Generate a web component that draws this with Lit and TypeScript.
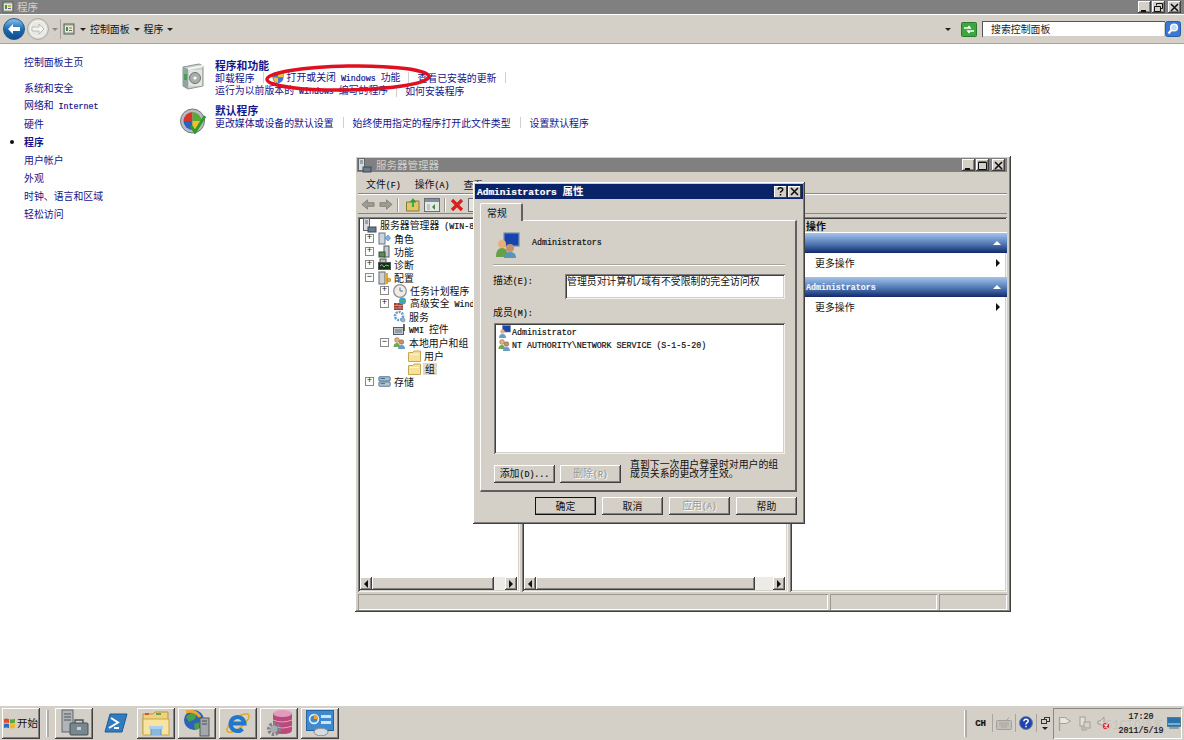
import { LitElement, html, css } from "lit";
import { customElement } from "lit/decorators.js";

// wrap ascii runs so they get the half-width latin face next to the CJK text
const t = (s: string) =>
  s.split(/([\x00-\x7f]+)/).map((p, i) => (i % 2 ? html`<span class="l">${p}</span>` : p));

const icons = {
  panel: (s = 12) => html`<svg width=${s} height=${s} viewBox="0 0 12 12"><rect x="1" y="1" width="10" height="10" fill="#b8c4b4" stroke="#56605a"/><rect x="2" y="3" width="8" height="6" fill="#e8ead8"/><rect x="3" y="4" width="2" height="4" fill="#4a8a5a"/><rect x="6" y="4" width="3" height="2" fill="#d8b040"/><rect x="6" y="7" width="3" height="1" fill="#5a6a8a"/></svg>`,
  programs: html`<svg width="25" height="28" viewBox="0 0 25 28"><path d="M3 5 L19 2 L23 4 L23 24 L8 27 L3 24Z" fill="#c9d2cf" stroke="#8a9490"/><path d="M3 5 L8 7 L8 27 L3 24Z" fill="#8fa49c"/><path d="M8 7 L23 4" stroke="#f4f6f0" stroke-width="2"/><rect x="9" y="8" width="13" height="16" fill="#e4e6de"/><circle cx="15" cy="16" r="5.5" fill="#a9b0ac" stroke="#6d7672"/><circle cx="15" cy="16" r="1.6" fill="#fff"/><rect x="4" y="12" width="3" height="6" fill="#4e9a5a"/></svg>`,
  defaults: html`<svg width="26" height="27" viewBox="0 0 26 27"><circle cx="12.5" cy="14" r="12" fill="#b9bcc0" stroke="#73777c"/><path d="M12.5 14 V5 A9 9 0 0 0 3.5 14Z" fill="#d8342c"/><path d="M12.5 14 V5 A9 9 0 0 1 21.5 14Z" fill="#58a83c"/><path d="M12.5 14 H3.5 A9 9 0 0 0 12.5 23Z" fill="#2a62c0"/><path d="M12.5 14 H21.5 A9 9 0 0 1 12.5 23Z" fill="#f0c020"/><path d="M11 19 L15 25 L25 9" fill="none" stroke="#2f9a2a" stroke-width="3"/></svg>`,
  shield: html`<svg width="12" height="13" viewBox="0 0 12 13"><path d="M6 0.5 L11.5 2 V7 Q11 11 6 12.5 Q1 11 0.5 7 V2Z" fill="#3a6ac8"/><path d="M6 1 V6.5 H1 V2.4Z" fill="#3f78d8"/><path d="M6 1 L11 2.4 V6.5 H6Z" fill="#f2c430"/><path d="M1 6.5 H6 V12 Q2 11 1 6.5Z" fill="#f2c430"/><path d="M6 6.5 H11 Q10.5 11 6 12Z" fill="#3f78d8"/></svg>`,
  back: html`<svg width="22" height="22" viewBox="0 0 22 22"><defs><linearGradient id="bk" x1="0" y1="0" x2="0" y2="1"><stop offset="0" stop-color="#8cc4ec"/><stop offset=".5" stop-color="#1f6db4"/><stop offset="1" stop-color="#0c4c90"/></linearGradient></defs><circle cx="11" cy="11" r="10.5" fill="url(#bk)" stroke="#2a5a8a"/><path d="M5 11 L10 6 V9 H17 V13 H10 V16Z" fill="#fff"/></svg>`,
  forward: html`<svg width="22" height="22" viewBox="0 0 22 22"><circle cx="11" cy="11" r="10.5" fill="#dcdcd6" stroke="#a8aaa6"/><circle cx="11" cy="11" r="8" fill="#e8e8e2" stroke="#f8f8f4"/><path d="M17 11 L12 6 V9 H5 V13 H12 V16Z" fill="#f4f4f0" stroke="#a4a6a2" stroke-width=".7"/></svg>`,
  refresh: html`<svg width="16" height="15" viewBox="0 0 16 15"><rect x=".5" y=".5" width="15" height="14" rx="1" fill="#3aa83c" stroke="#2a7a30"/><path d="M3 6 H9 L7.5 4 M13 9 H7 L8.5 11" fill="none" stroke="#fff" stroke-width="1.6"/></svg>`,
  search: html`<svg width="16" height="16" viewBox="0 0 16 16"><rect x=".5" y=".5" width="15" height="15" rx="2" fill="#3a78d8" stroke="#2a5aa8"/><circle cx="9" cy="6.5" r="3.4" fill="#bcdcf8" stroke="#fff" stroke-width="1.4"/><path d="M6.5 9 L3.5 12.5" stroke="#fff" stroke-width="2"/></svg>`,
  server: html`<svg width="15" height="15" viewBox="0 0 15 15"><rect x="1.5" y=".5" width="6" height="12" fill="#d8dce0" stroke="#606870"/><path d="M3 3 H6 M3 5 H6" stroke="#606870"/><rect x="6" y="9" width="8" height="5" fill="#6a7c8c" stroke="#3e4a56"/></svg>`,
  role: html`<svg width="13" height="13" viewBox="0 0 13 13"><rect x="1" y="1" width="6" height="11" fill="#ccd4dc" stroke="#6a7480"/><path d="M7 6 L10 3 L12.5 6 L10 9Z" fill="#7ab4e8" stroke="#4a80b0" stroke-width=".6"/></svg>`,
  feature: html`<svg width="13" height="13" viewBox="0 0 13 13"><rect x="6" y="1" width="5" height="11" fill="#c8ccd0" stroke="#555c64"/><rect x="1" y="7" width="6" height="5" fill="#5c8a5c" stroke="#2f4f30"/></svg>`,
  diag: html`<svg width="13" height="13" viewBox="0 0 13 13"><rect x="2" y="1" width="6" height="4" fill="#b8bec4" stroke="#555"/><rect x=".5" y="4.5" width="12" height="7" fill="#1c2c1c" stroke="#555"/><path d="M2 8 L4 6.5 L6 9 L8 7 L11 8" stroke="#58d858" fill="none"/></svg>`,
  config: html`<svg width="13" height="14" viewBox="0 0 13 14"><rect x="1" y="1" width="6" height="12" fill="#ced2d6" stroke="#666"/><rect x="8" y="2" width="2" height="11" fill="#e8a820"/><circle cx="11" cy="9" r="1.8" fill="#e8b838" stroke="#946c10" stroke-width=".6"/></svg>`,
  clock: html`<svg width="14" height="14" viewBox="0 0 14 14"><circle cx="7" cy="7" r="6.3" fill="#f0ece0" stroke="#8c9298" stroke-width="1.3"/><path d="M7 3.5 V7 H10" stroke="#4a78a8" fill="none"/></svg>`,
  firewall: html`<svg width="14" height="13" viewBox="0 0 14 13"><rect x="1" y="6" width="9" height="7" fill="#a04030"/><path d="M1 8.5 H10 M1 11 H10 M4 6 V8.5 M7 8.5 V11" stroke="#e0c0a8" stroke-width=".6"/><circle cx="9.5" cy="4" r="3.5" fill="#3aa0d8"/><path d="M7 3 Q10 2 12 5" stroke="#58b048" fill="none" stroke-width="1.4"/></svg>`,
  gear: html`<svg width="13" height="13" viewBox="0 0 13 13"><circle cx="6" cy="6" r="4" fill="none" stroke="#6a9ad0" stroke-width="2.6" stroke-dasharray="2 1"/><circle cx="6" cy="6" r="2" fill="#fff"/><circle cx="10" cy="10" r="2" fill="#9ab8d8" stroke="#5a80a8" stroke-width=".6"/></svg>`,
  wmi: html`<svg width="13" height="13" viewBox="0 0 13 13"><rect x=".5" y="4.5" width="10" height="7" fill="#c0c8d0" stroke="#555e68"/><path d="M2 7 H9 M2 9 H9" stroke="#60707e"/><path d="M11 1 V8" stroke="#444" stroke-width="1.6"/></svg>`,
  users: (s = 13) => html`<svg width=${s} height=${s} viewBox="0 0 13 13"><rect x="5" y="0.5" width="7.5" height="6.5" fill="#1844b0" stroke="#7a8ea8" stroke-width=".6"/><circle cx="4" cy="6" r="2" fill="#e8b078"/><path d="M1 12.5 Q1 8 4 8 Q7 8 7 12.5Z" fill="#68a048"/><circle cx="8" cy="8" r="2" fill="#c89068"/><path d="M5 13 Q5 10 8 10 Q11 10 11 13Z" fill="#5a94b8"/></svg>`,
  user: html`<svg width="13" height="13" viewBox="0 0 13 13"><rect x="4.5" y=".5" width="8" height="6.5" fill="#1844b0" stroke="#7a8ea8" stroke-width=".6"/><circle cx="4.5" cy="6.5" r="2.2" fill="#e8b078"/><path d="M1 13 Q1 9 4.5 9 Q8 9 8 13Z" fill="#6a9cc8"/></svg>`,
  group: html`<svg width="13" height="13" viewBox="0 0 13 13"><circle cx="4" cy="4" r="2.4" fill="#e4b080" stroke="#8a6a40" stroke-width=".5"/><path d="M.5 11 Q.5 7 4 7 Q7 7 7 11Z" fill="#70a850"/><circle cx="8.5" cy="6" r="2.3" fill="#c89068" stroke="#6a5040" stroke-width=".5"/><path d="M5 13 Q5 9 8.5 9 Q12 9 12 13Z" fill="#6a9cc8"/></svg>`,
  folder: html`<svg width="13" height="12" viewBox="0 0 13 12"><path d="M.5 2.5 H5 L6 1 H12.5 V11.5 H.5Z" fill="#f6e09a" stroke="#c8a850"/><rect x="2" y="4" width="9" height="1" fill="#fff6d0"/></svg>`,
  storage: html`<svg width="13" height="13" viewBox="0 0 15 13"><rect x="1" y="1" width="13" height="5" rx="1" fill="#9fc0d8" stroke="#4a6a84"/><rect x="1" y="7" width="13" height="5" rx="1" fill="#b8c8d4" stroke="#4a6a84"/><path d="M3 3 H8 M3 9 H8" stroke="#2e5a7a"/></svg>`,
  navBack: html`<svg width="14" height="13" viewBox="0 0 15 13"><path d="M1 6.5 L7 1.5 V4.5 H14 V8.5 H7 V11.5Z" fill="#9c9c92" stroke="#84847a"/></svg>`,
  navFwd: html`<svg width="14" height="13" viewBox="0 0 15 13"><path d="M14 6.5 L8 1.5 V4.5 H1 V8.5 H8 V11.5Z" fill="#9c9c92" stroke="#84847a"/></svg>`,
  upFolder: html`<svg width="14" height="14" viewBox="0 0 14 14"><path d="M.5 4 H5 L6 3 H13 V13 H.5Z" fill="#dcc868" stroke="#8a7a30"/><path d="M7 9 V3 M4.5 4.5 L7 1.5 L9.5 4.5" stroke="#2e9a3c" stroke-width="1.6" fill="none"/></svg>`,
  viewPane: html`<svg width="16" height="14" viewBox="0 0 16 14"><rect x=".5" y=".5" width="15" height="13" fill="#e8e8e2" stroke="#6a6e72"/><rect x="1" y="1" width="14" height="3" fill="#7e8ea0"/><rect x="3" y="6" width="3" height="6" fill="#bcc4cc"/><path d="M11 6 L8 9 L11 12Z" fill="#3a8a4a"/></svg>`,
  redX: html`<svg width="14" height="14" viewBox="0 0 14 14"><path d="M2 2 L12 12 M12 2 L2 12" stroke="#d8201c" stroke-width="3.2"/></svg>`,
  page: html`<svg width="14" height="14" viewBox="0 0 14 14"><rect x=".5" y=".5" width="13" height="13" fill="#e4e4de" stroke="#6a6e72"/></svg>`,
  tbServer: html`<svg width="30" height="28" viewBox="0 0 30 28"><rect x="3" y="1" width="11" height="22" fill="#b0b4b8" stroke="#60666c"/><path d="M5 5 H12 M5 8 H12 M5 11 H12" stroke="#50565c"/><rect x="11" y="14" width="18" height="12" rx="1" fill="#78868e" stroke="#48525a"/><path d="M16 14 V11 H24 V14" fill="none" stroke="#48525a" stroke-width="1.4"/><rect x="18" y="18" width="4" height="3" fill="#c8d0d4"/></svg>`,
  tbPs: html`<svg width="24" height="20" viewBox="0 0 24 20"><path d="M6 1 H23 L18 19 H1Z" fill="#2f7cc0" stroke="#1c5a94"/><path d="M7 5 L14 9.5 L5 15 M10 15 H15" fill="none" stroke="#fff" stroke-width="2"/></svg>`,
  tbFolder: html`<svg width="28" height="26" viewBox="0 0 28 26"><path d="M1 4 H11 L13 2 H26 V24 H1Z" fill="#efd27a" stroke="#b8963c"/><rect x="3" y="3" width="4" height="2" fill="#d85040"/><rect x="14" y="3" width="5" height="2" fill="#58a858"/><path d="M1 9 H27 V25 H1Z" fill="#f7e4a0" stroke="#c4a44c"/><path d="M9 25 V18 H19 V25" fill="#88b8e0" stroke="#6a94bc"/><rect x="7" y="16" width="14" height="3" fill="#a8d0f0"/></svg>`,
  tbGlobe: html`<svg width="28" height="28" viewBox="0 0 28 28"><circle cx="11" cy="11" r="10" fill="#2c62b8"/><path d="M3 8 Q8 2 14 4 L12 10 L6 13Z" fill="#4aa048"/><path d="M11 15 L17 13 L16 20 L12 21Z" fill="#4aa048"/><path d="M3 3 Q12 0 17 8" stroke="#f0a828" stroke-width="3" fill="none"/><rect x="17" y="9" width="9" height="18" fill="#a4a8ac" stroke="#555b60"/><path d="M19 12 H24 M19 15 H24" stroke="#484c50"/></svg>`,
  tbIe: html`<svg width="28" height="28" viewBox="0 0 28 28"><ellipse cx="14" cy="14" rx="13.5" ry="5" transform="rotate(-38 14 14)" fill="none" stroke="#e8a818" stroke-width="1.5"/><path d="M7.5 14.5 H20.5 A7 7 0 1 0 18.5 20" fill="none" stroke="#1f78cc" stroke-width="4"/></svg>`,
  tbDb: html`<svg width="28" height="28" viewBox="0 0 28 28"><path d="M8 4 V21 Q8 25 18 25 Q27 25 27 21 V4Z" fill="#b84a7c"/><ellipse cx="17.5" cy="4.5" rx="9.5" ry="3.5" fill="#e49cbc"/><path d="M8 11 Q17 15 27 11 M8 17 Q17 21 27 17" stroke="#e8a4c0" fill="none"/><circle cx="9" cy="20" r="5" fill="none" stroke="#80848a" stroke-width="4" stroke-dasharray="2.4 1.3"/><circle cx="9" cy="20" r="3.5" fill="#a8acb0"/></svg>`,
  tbPanel: html`<svg width="28" height="26" viewBox="0 0 28 26"><rect x=".5" y=".5" width="27" height="20" fill="#3e8ad0" stroke="#2a62a0"/><circle cx="8" cy="9" r="4.4" fill="none" stroke="#e0f0ff" stroke-width="1.6"/><path d="M8 9 V4.6 A4.4 4.4 0 0 1 12.4 9Z" fill="#f0a030"/><rect x="15" y="5" width="10" height="3" fill="#cfe4f8"/><rect x="15" y="11" width="10" height="3" fill="#cfe4f8"/><ellipse cx="15" cy="22" rx="7" ry="3.8" fill="#d8dce0" stroke="#8a8e92"/></svg>`,
  flag: html`<svg width="14" height="15" viewBox="0 0 14 15"><path d="M1.5 1.5 H8 V2.5 L12.5 5 L8 7.5 H1.5Z" fill="#e8e6de" stroke="#a6a498"/><path d="M1.5 1 V15" stroke="#a6a498" stroke-width="1.4"/></svg>`,
  winFlag: html`<svg width="13" height="12" viewBox="0 0 13 12"><path d="M1 2 Q3 1 6 2 V6 Q3 5 1 6Z" fill="#e04a2a"/><path d="M7 2 Q9 3 12 1.5 V5.5 Q9 7 7 6Z" fill="#5ca83a"/><path d="M1 7 Q3 6 6 7 V11 Q3 10 1 11Z" fill="#2c6ac8"/><path d="M7 7 Q9 8 12 6.5 V10.5 Q9 12 7 11Z" fill="#f0b820"/></svg>`,
  keyboard: html`<svg width="16" height="13" viewBox="0 0 16 13"><rect x=".5" y="3.5" width="15" height="9" rx="1" fill="#c2c0b8" stroke="#a2a098"/><path d="M3 6 H13 M3 8 H13 M5 10 H11" stroke="#a8a69e"/><path d="M11 3 L13 .5" stroke="#a2a098"/></svg>`,
  help: html`<svg width="14" height="14" viewBox="0 0 14 14"><circle cx="7" cy="7" r="6.5" fill="#1e44b0" stroke="#70809c"/><path d="M4.8 5.2 Q5 3.2 7 3.2 Q9.2 3.2 9.2 5 Q9.2 6.2 7.6 7 Q7 7.4 7 8.6 M7 9.8 V11.2" fill="none" stroke="#fff" stroke-width="1.5"/></svg>`,
  net: html`<svg width="13" height="15" viewBox="0 0 13 15"><rect x="2" y="1" width="5" height="9" fill="#e2e0d8" stroke="#a0a094"/><rect x="6" y="6" width="6" height="6" fill="#d4d2ca" stroke="#a0a094"/><path d="M4 10 V14 H9" stroke="#a0a094" fill="none"/></svg>`,
  sound: html`<svg width="14" height="15" viewBox="0 0 14 15"><path d="M1 5 H3 L7 1 V11 L3 8 H1Z" fill="#d8d6ce" stroke="#a09e94"/><circle cx="9" cy="10" r="3.8" fill="#d82828" stroke="#fff" stroke-width=".6"/><path d="M7.5 8.5 L10.5 11.5 M10.5 8.5 L7.5 11.5" stroke="#fff" stroke-width="1.1"/></svg>`,
  monitor: html`<svg width="14" height="13" viewBox="0 0 14 13"><rect x=".5" y=".5" width="13" height="9" fill="#2c72a8" stroke="#5a7a90"/><path d="M1 7 H13" stroke="#64b8e0" stroke-width="2"/><rect x="2" y="10" width="10" height="2" fill="#8ea0ac"/></svg>`,
};

const cap = {
  min: html`<svg width="9" height="9" viewBox="0 0 9 9"><rect x="1" y="7" width="5" height="2" fill="#111"/></svg>`,
  max: html`<svg width="9" height="9" viewBox="0 0 9 9"><path d="M.5 1.5 H8.5 V8.5 H.5Z M.5 1 H8.5" fill="none" stroke="#111"/></svg>`,
  restore: html`<svg width="9" height="9" viewBox="0 0 9 9"><path d="M2.5 2.5 V.5 H8.5 V5.5 H6.5 M.5 3.5 H6.5 V8.5 H.5Z" fill="none" stroke="#111"/></svg>`,
  close: html`<svg width="9" height="9" viewBox="0 0 9 9"><path d="M1 1 L8 8 M8 1 L1 8" stroke="#111" stroke-width="1.6"/></svg>`,
  help: html`<svg width="9" height="9" viewBox="0 0 9 9"><path d="M2 2.6 Q2.2 .8 4.5 .8 Q6.8 .8 6.8 2.6 Q6.8 3.8 5.2 4.4 Q4.5 4.8 4.5 5.8 M4.5 7 V8.6" fill="none" stroke="#111" stroke-width="1.5"/></svg>`,
};

const tree = [
  { lvl: 0, icon: icons.server, text: "服务器管理器 (WIN-8" },
  { lvl: 1, exp: "+", icon: icons.role, text: "角色" },
  { lvl: 1, exp: "+", icon: icons.feature, text: "功能" },
  { lvl: 1, exp: "+", icon: icons.diag, text: "诊断" },
  { lvl: 1, exp: "-", icon: icons.config, text: "配置" },
  { lvl: 2, exp: "+", icon: icons.clock, text: "任务计划程序" },
  { lvl: 2, exp: "+", icon: icons.firewall, text: "高级安全 Wind" },
  { lvl: 2, icon: icons.gear, text: "服务" },
  { lvl: 2, icon: icons.wmi, text: "WMI 控件" },
  { lvl: 2, exp: "-", icon: icons.group, text: "本地用户和组" },
  { lvl: 3, icon: icons.folder, text: "用户" },
  { lvl: 3, icon: icons.folder, text: "组", sel: true },
  { lvl: 1, exp: "+", icon: icons.storage, text: "存储" },
];

const sideLinks = ["系统和安全", "网络和 Internet", "硬件", "程序", "用户帐户", "外观", "时钟、语言和区域", "轻松访问"];

@customElement("app-root")
export class AppRoot extends LitElement {
  static styles = css`
    :host {
      display: flex;
      flex-direction: column;
      position: relative;
      width: 1184px;
      height: 740px;
      overflow: hidden;
      background: #fff;
      font-family: "Noto Sans CJK SC", sans-serif;
      font-size: 9.9px;
      line-height: 12px;
      color: #111;
    }
    svg { display: block; flex: none; }
    .l { font-family: "Liberation Mono", monospace; font-size: 8.3px; -webkit-text-stroke: 0.2px; }

    .raised {
      background: #d4d0c8;
      box-shadow: inset -1px -1px #404040, inset 1px 1px #fff, inset -2px -2px #808080;
    }
    .sunken {
      box-shadow: inset 1px 1px #808080, inset -1px -1px #f4f2ee, inset 2px 2px #404040, inset -2px -2px #d4d0c8;
    }
    .capbtn { width: 13px; height: 12px; display: flex; align-items: center; justify-content: center; }
    .caption { display: flex; align-items: center; background: #808080; color: #d4d0c8; font-size: 10.5px; }
    .capbtns { display: flex; gap: 1px; margin-left: auto; }
    .capbtns .gap { margin-left: 2px; }

    /* control panel window */
    .titlebar { height: 14px; padding: 0 3px 0 2px; gap: 3px; }
    .addr { height: 30px; display: flex; align-items: center; background: #d4d0c8; border-bottom: 1px solid #a8a59e; box-sizing: border-box; padding: 0 3px; border-top: 1px solid #fff; }
    .addr .fwd { margin-left: 2px; }
    .darr { width: 0; height: 0; border: 3px solid transparent; border-top: 3px solid #222; border-bottom: 0; flex: none; }
    .crumbs { display: flex; align-items: center; height: 20px; margin-left: 2px; padding-left: 2px; flex: 1; border-left: 1px solid #a8a59e; gap: 4px; }
    .crumbs svg { margin-right: 1px; }
    .searchbox { width: 183px; height: 16px; margin-left: 5px; background: #fff; box-sizing: border-box; padding-left: 9px; display: flex; align-items: center; color: #222; box-shadow: inset 1px 1px #555, inset -1px -1px #d4d0c8; }
    .addr .drop { margin-right: 10px; }

    .body { flex: 1; display: flex; min-height: 0; }
    .side { width: 171px; padding: 9px 0 0 9px; color: #14148c; flex: none; }
    .side .row { height: 18px; display: grid; grid-template-columns: 15px auto; align-items: center; }
    .side .home { margin-bottom: 8px; }
    .side .cur { font-weight: 700; }
    .dot { width: 4px; height: 4px; border-radius: 50%; background: #111; margin-left: 1px; }
    .main { padding-top: 15px; color: #14148c; }
    .grp { display: grid; grid-template-columns: 35px auto; margin-bottom: 6px; }
    .grp .ic { padding-top: 3px; }
    .grp h3 { margin: 0; font-size: 10.8px; font-weight: 700; line-height: 12px; height: 12px; }
    .links { display: flex; align-items: center; height: 13px; white-space: pre; }
    .links.tall { height: 14px; }
    .links .sh { margin-right: 3px; }
    .sep { width: 1px; height: 11px; background: #d0d0d0; margin: 0 9px; flex: none; }
    .first .sep { margin: 0 8px; }

    .oval { position: absolute; left: 260px; top: 60px; }

    /* server manager */
    .win { position: absolute; box-sizing: border-box; background: #d4d0c8; }
    .srv { left: 355px; top: 156px; width: 656px; height: 456px; padding: 2px 4px 2px 3px; display: flex; flex-direction: column; }
    .srv .caption { height: 14px; gap: 4px; margin: 0 0 2px -1px; padding-right: 2px; }
    .menu { height: 20px; display: flex; align-items: center; gap: 14px; padding: 2px 0 0 8px; border-bottom: 1px solid #8a8780; box-sizing: border-box; }
    .tools { height: 20px; display: flex; align-items: center; gap: 4px; padding: 1px 0 0 3px; border-top: 1px solid #fff; border-bottom: 1px solid #8a8780; box-sizing: border-box; }
    .vsep { width: 2px; height: 14px; background: #9a9890; margin-right: 3px; border-right: 1px solid #fff; box-sizing: border-box; flex: none; }
    .vsep.tight { margin-right: 0; }
    .panes { height: 375px; margin-top: 3px; display: flex; gap: 2px; }
    .pane { background: #fff; box-sizing: border-box; display: flex; flex-direction: column; padding: 2px; }
    .tree { width: 162px; }
    .center { width: 266px; }
    .actions { width: 217px; padding: 2px 0 0 2px; }
    .fill { flex: 1; }
    .node { height: 13px; display: flex; align-items: center; white-space: pre; }
    .exp { width: 9px; height: 9px; box-sizing: border-box; border: 1px solid #888; display: flex; align-items: center; justify-content: center; font: 9px/7px "Liberation Mono", monospace; margin-right: 4px; flex: none; color: #222; }
    .spacer { width: 13px; flex: none; }
    .node .txt { margin-left: 3px; }
    .node .sel { background: #dcdad4; padding: 0 2px; margin-left: 2px; }

    .hbar { height: 13px; display: flex; background: #ecebe6; margin-right: 1px; }
    .hbtn { width: 12px; display: flex; align-items: center; justify-content: center; flex: none; }
    .thumb { height: 13px; }
    .la { width: 0; height: 0; border: 4px solid transparent; border-right: 4px solid #111; border-left: 0; }
    .ra { width: 0; height: 0; border: 4px solid transparent; border-left: 4px solid #111; border-right: 0; }

    .acthead { height: 14px; background: #d4d0c8; font-weight: 700; padding-left: 14px; display: flex; align-items: center; border-bottom: 1px solid #fff; box-sizing: border-box; }
    .strip { height: 20px; background: linear-gradient(#a4c4ec, #5078b4 55%, #12296c); color: #f0f4f8; display: flex; align-items: center; justify-content: space-between; padding-right: 6px; }
    .strip .l { font-weight: 700; }
    .ua { width: 0; height: 0; border: 4px solid transparent; border-bottom: 4px solid #fff; border-top: 0; }
    .more { height: 24px; box-sizing: border-box; padding: 0 7px 4px 23px; display: flex; align-items: center; justify-content: space-between; }

    .status { margin-top: 2px; height: 16px; display: flex; gap: 2px; }
    .status div { box-shadow: inset 1px 1px #9a9890, inset -1px -1px #fff; }

    /* properties dialog */
    .dlg { left: 473px; top: 182px; width: 332px; height: 342px; padding: 2px; display: flex; flex-direction: column; }
    .dlg .cap2 { background: #0a246a; color: #fff; font-weight: 700; height: 15px; display: flex; align-items: center; padding: 0 2px; font-size: 10.5px; }
    .dlg .cap2 .l { font-size: 9.5px; }
    .dlg .cap2 .capbtn { background: #d4d0c8; box-shadow: inset -1px -1px #404040, inset 1px 1px #fff; }
    .tabs { margin-top: 4px; padding-left: 5px; height: 18px; display: flex; align-items: flex-end; position: relative; z-index: 1; }
    .tab { width: 43px; height: 18px; display: flex; align-items: center; padding-left: 6px; box-sizing: border-box; background: #d4d0c8; border-top: 1px solid #fff; border-left: 1px solid #fff; border-right: 2px solid #606060; border-radius: 2px 2px 0 0; }
    .page { margin: -1px 6px 0 5px; height: 272px; box-sizing: border-box; padding: 11px 10px 0 12px; border-top: 1px solid #fff; border-left: 1px solid #fff; border-right: 2px solid #606060; border-bottom: 2px solid #606060; }
    .head { height: 26px; display: flex; align-items: center; gap: 12px; padding-left: 1px; }
    .head span { margin-bottom: 6px; }
    .hr { height: 2px; margin-top: 6px; background: #a8a59e; border-bottom: 1px solid #fff; box-sizing: border-box; }
    .descr { display: flex; margin-top: 8px; height: 25px; }
    .descr label { width: 72px; flex: none; }
    .descr .box { flex: 1; background: #fff; padding: 1px 2px; box-sizing: border-box; }
    .mlabel { margin-top: 7px; height: 12px; }
    .list { margin: 5px 0 0 1px; height: 131px; background: #fff; box-sizing: border-box; padding: 2px 4px; }
    .list .it { height: 13px; display: flex; align-items: center; white-space: pre; }
    .list .it svg { margin-right: 1px; }
    .act { display: flex; margin-top: 11px; height: 18px; align-items: center; }
    .btn { display: flex; align-items: center; justify-content: center; box-sizing: border-box; white-space: pre; }
    .act .btn { width: 61px; height: 18px; margin-left: 1px; }
    .act .btn + .btn { margin-left: 5px; }
    .note { margin: -5px 0 0 9px; align-self: flex-start; line-height: 9px; width: 152px; }
    .off { color: #9c9a94; text-shadow: 1px 1px #fff; }
    .foot { margin: 5px 6px 0 0; display: flex; justify-content: flex-end; gap: 6px; }
    .foot .btn { width: 61px; height: 18px; }
    .def { outline: 1px solid #111; outline-offset: -1px; }

    /* taskbar */
    .taskbar { height: 35px; flex: none; background: #d4d0c8; border-top: 1px solid #fff; display: flex; align-items: center; padding-left: 2px; box-sizing: border-box; }
    .start { width: 38px; height: 31px; display: flex; align-items: center; padding-left: 1px; gap: 1px; box-sizing: border-box; font-size: 10.5px; }
    .grip { width: 2px; height: 27px; background: #b0ada6; border-left: 1px solid #fff; margin: 0 6px; flex: none; }
    .qbtn { width: 38px; height: 31px; display: flex; align-items: center; justify-content: center; margin-right: 3px; }
    .ps { background: none; box-shadow: none; width: 39px; margin-right: 2px; }
    .tail { margin-left: auto; display: flex; align-items: center; height: 100%; }
    .tail .grip { margin: 0 8px 0 0; }
    .tsep { width: 1px; height: 18px; background: #a8a59e; margin: 0 3px; flex: none; }
    .ch { margin-right: 3px; }
    .ch .l { font-size: 9px; font-weight: 700; }
    .mini { display: flex; flex-direction: column; align-items: center; gap: 3px; width: 10px; }
    .tray { display: flex; align-items: center; width: 129px; height: 31px; margin: 0 2px 0 3px; padding: 0 1px 0 5px; box-sizing: border-box; gap: 6px; box-shadow: inset 1px 1px #8a8780, inset -1px -1px #fff; position: relative; }
    .clock { text-align: center; width: 48px; line-height: 13px; flex: none; margin-right: -4px; position: relative; z-index: 1; }
    .wm { position: absolute; left: 52px; top: 10px; color: #c6c4bd; font-size: 11px; white-space: pre; }
    .wm .l { font-size: 12px; -webkit-text-stroke: 0; }
  `;

  private _tree() {
    return tree.map(
      (n: any) => html`<div class="node" style="padding-left:${n.lvl === 0 ? 2 : n.lvl === 3 ? 48 : (n.lvl - 1) * 15 + 5}px">
        ${n.exp ? html`<span class="exp">${n.exp === "+" ? "+" : "−"}</span>` : n.lvl === 2 ? html`<span class="spacer"></span>` : ""}
        ${n.icon}
        <span class=${n.sel ? "sel" : "txt"}>${t(n.text)}</span>
      </div>`
    );
  }

  private _hbar(thumb: number) {
    return html`<div class="hbar">
      <div class="hbtn raised"><i class="la"></i></div>
      <div class="thumb raised" style="width:${thumb}px"></div>
      <div class="fill"></div>
      <div class="hbtn raised"><i class="ra"></i></div>
    </div>`;
  }

  private _serverWin() {
    return html`<div class="win raised srv">
      <div class="caption">
        ${icons.server}<span>服务器管理器</span>
        <div class="capbtns">
          <div class="capbtn raised">${cap.min}</div><div class="capbtn raised">${cap.max}</div><div class="capbtn raised gap">${cap.close}</div>
        </div>
      </div>
      <div class="menu"><span>${t("文件(F)")}</span><span>${t("操作(A)")}</span><span>查看</span></div>
      <div class="tools">
        ${icons.navBack}${icons.navFwd}<i class="vsep"></i>${icons.upFolder}${icons.viewPane}<i class="vsep tight"></i>${icons.redX}${icons.page}
      </div>
      <div class="panes">
        <div class="pane tree sunken">
          <div>${this._tree()}</div>
          <div class="fill"></div>
          ${this._hbar(122)}
        </div>
        <div class="pane center sunken">
          <div class="fill"></div>
          ${this._hbar(219)}
        </div>
        <div class="pane actions sunken">
          <div class="acthead">操作</div>
          <div class="strip"><span></span><i class="ua"></i></div>
          <div class="more"><span>更多操作</span><i class="ra"></i></div>
          <div class="strip"><span style="padding-left:14px">${t("Administrators")}</span><i class="ua"></i></div>
          <div class="more"><span>更多操作</span><i class="ra"></i></div>
        </div>
      </div>
      <div class="status">
        <div style="width:470px"></div><div style="width:107px"></div><div style="width:68px"></div>
      </div>
    </div>`;
  }

  private _dialog() {
    return html`<div class="win raised dlg">
      <div class="cap2">
        <span>${t("Administrators ")}属性</span>
        <div class="capbtns"><div class="capbtn">${cap.help}</div><div class="capbtn">${cap.close}</div></div>
      </div>
      <div class="tabs"><div class="tab">常规</div></div>
      <div class="page">
        <div class="head">${icons.users(26)}<span>${t("Administrators")}</span></div>
        <div class="hr"></div>
        <div class="descr"><label>${t("描述(E):")}</label><div class="box sunken">${t("管理员对计算机/域有不受限制的完全访问权")}</div></div>
        <div class="mlabel">${t("成员(M):")}</div>
        <div class="list sunken">
          <div class="it">${icons.user}<span>${t("Administrator")}</span></div>
          <div class="it">${icons.group}<span>${t("NT AUTHORITY\\NETWORK SERVICE (S-1-5-20)")}</span></div>
        </div>
        <div class="act">
          <div class="btn raised"><span>${t("添加(D)...")}</span></div>
          <div class="btn raised off"><span>${t("删除(R)")}</span></div>
          <div class="note">直到下一次用户登录时对用户的组成员关系的更改才生效。</div>
        </div>
      </div>
      <div class="foot">
        <div class="btn raised def">确定</div>
        <div class="btn raised">取消</div>
        <div class="btn raised off"><span>${t("应用(A)")}</span></div>
        <div class="btn raised">帮助</div>
      </div>
    </div>`;
  }

  render() {
    return html`
      <div class="caption titlebar">
        ${icons.panel()}<span>程序</span>
        <div class="capbtns">
          <div class="capbtn raised">${cap.min}</div><div class="capbtn raised">${cap.restore}</div><div class="capbtn raised gap">${cap.close}</div>
        </div>
      </div>
      <div class="addr">
        ${icons.back}<span class="fwd">${icons.forward}</span>
        <i class="darr" style="margin-left:3px;border-top-color:#888"></i>
        <div class="crumbs">
          ${icons.panel()}<i class="darr"></i><span>控制面板</span><i class="darr"></i><span>程序</span><i class="darr"></i>
        </div>
        <i class="darr drop"></i>
        ${icons.refresh}
        <div class="searchbox">搜索控制面板</div>
        ${icons.search}
      </div>
      <div class="body">
        <div class="side">
          <div class="row home"><span></span><span>控制面板主页</span></div>
          ${sideLinks.map(
            (s) => html`<div class="row ${s === "程序" ? "cur" : ""}">
              ${s === "程序" ? html`<i class="dot"></i>` : html`<span></span>`}<span>${t(s)}</span>
            </div>`
          )}
        </div>
        <div class="main">
          <div class="grp">
            <div class="ic">${icons.programs}</div>
            <div class="first">
              <h3>程序和功能</h3>
              <div class="links">
                <span>卸载程序</span><i class="sep"></i>
                <span class="sh">${icons.shield}</span><span>${t("打开或关闭 Windows 功能")}</span><i class="sep"></i>
                <span>查看已安装的更新</span><i class="sep"></i>
              </div>
              <div class="links tall">
                <span>${t("运行为以前版本的 Windows 编写的程序")}</span><i class="sep"></i><span>如何安装程序</span>
              </div>
            </div>
          </div>
          <div class="grp">
            <div class="ic">${icons.defaults}</div>
            <div>
              <h3>默认程序</h3>
              <div class="links">
                <span>更改媒体或设备的默认设置</span><i class="sep"></i>
                <span>始终使用指定的程序打开此文件类型</span><i class="sep"></i>
                <span>设置默认程序</span>
              </div>
            </div>
          </div>
        </div>
      </div>
      <svg class="oval" width="176" height="36" viewBox="0 0 176 36">
        <ellipse cx="88" cy="18" rx="81" ry="12" transform="rotate(-1 88 18)" fill="none" stroke="#e01020" stroke-width="3.5"/>
      </svg>
      ${this._serverWin()}
      ${this._dialog()}
      <div class="taskbar">
        <div class="start raised">${icons.winFlag}<span>开始</span></div>
        <i class="grip"></i>
        <div class="qbtn raised">${icons.tbServer}</div>
        <div class="qbtn ps">${icons.tbPs}</div>
        <div class="qbtn raised">${icons.tbFolder}</div>
        <div class="qbtn raised">${icons.tbGlobe}</div>
        <div class="qbtn raised">${icons.tbIe}</div>
        <div class="qbtn raised">${icons.tbDb}</div>
        <div class="qbtn raised">${icons.tbPanel}</div>
        <div class="tail">
          <i class="grip"></i>
          <span class="ch">${t("CH")}</span><i class="tsep"></i>
          ${icons.keyboard}<i class="tsep"></i>
          ${icons.help}<i class="tsep"></i>
          <div class="mini"><svg width="9" height="7" viewBox="0 0 9 7"><rect x="3.5" y=".5" width="5" height="4" fill="none" stroke="#333"/><rect x=".5" y="2.5" width="5" height="4" fill="#d4d0c8" stroke="#333"/></svg><i class="darr"></i></div>
          <div class="tray">
            <span class="wm">${t("51CTO")}博客</span>
            ${icons.flag}${icons.net}${icons.sound}
            <div class="clock">${t("17:20")}<br />${t("2011/5/19")}</div>
            ${icons.monitor}
          </div>
        </div>
      </div>
    `;
  }
}
